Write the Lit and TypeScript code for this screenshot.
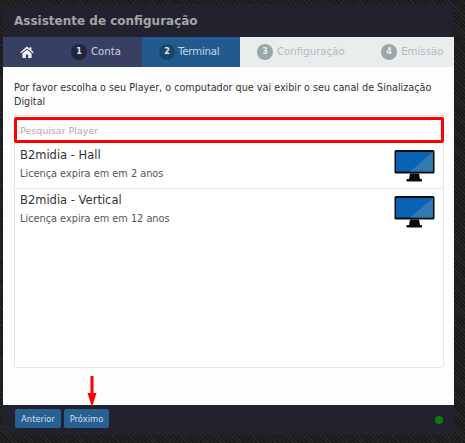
import { LitElement, html, css } from "lit";
import { customElement } from "lit/decorators.js";

const monitor = html`<svg class="mon" width="41" height="32" viewBox="0 0 41 32">
  <rect x="0.5" y="0" width="40" height="23.5" rx="1.5" fill="#0a0a0a"/>
  <rect x="2" y="2" width="37" height="19.5" fill="#0a62b4"/>
  <polygon points="39,2 39,21.5 16,21.5" fill="#3179ae"/>
  <polygon points="16,23.5 25,23.5 26,29 15,29" fill="#0a0a0a"/>
  <rect x="12.5" y="29" width="15.5" height="2.5" rx="0.8" fill="#0a0a0a"/>
</svg>`;

@customElement("app-root")
export class AppRoot extends LitElement {
  static styles = css`
    :host {
      display: block;
      width: 465px;
      height: 443px;
      overflow: hidden;
      position: relative;
      box-sizing: border-box;
      padding: 4px 11px 8px 3px;
      background-color: #1c1c1c;
      background-image: repeating-linear-gradient(45deg, #2a2a2a 0 1px, #1a1a1a 1px 3px);
      font-family: "DejaVu Sans", sans-serif;
      color: #333;
    }
    .modal { height: 431px; display: flex; flex-direction: column; background: #fff; }
    .head {
      height: 33px; flex: none; background: #22222f; color: #a5a5a5;
      font-size: 12px; font-weight: 700; display: flex; align-items: center;
      padding-left: 11px;
    }
    .tabs { height: 30px; flex: none; display: flex; font-size: 10.2px; }
    .tab { display: flex; align-items: center; color: #cdd1de; padding-bottom: 1px; box-sizing: border-box; }
    .home { width: 48px; background: #373f63; justify-content: center; }
    .t1 { width: 91px; background: #373f63; padding-left: 20px; }
    .t2 { width: 98px; background: #215a8e; padding-left: 17px; color: #c6d6e4; letter-spacing: -0.2px; }
    .t3 { flex: 1; background: #e9edee; padding-left: 17px; color: #b0bcbc; }
    .num {
      width: 16px; height: 16px; border-radius: 50%; display: flex; align-items: center;
      justify-content: center; font-size: 8px; font-weight: 700; margin-right: 4px;
      background: #22253f; color: #e8e8e8; flex: none;
    }
    .t2 .num { background: #1a4669; margin-right: 3px; }
    .t3 .num { background: #9aa7a7; color: #e9edee; }
    .gap { width: 36.5px; }
    .body {
      flex: 1; background: #fdfdfd; padding: 14px 10px 37px 11px; display: flex;
      flex-direction: column; min-height: 0;
    }
    .intro { font-size: 9.63px; line-height: 14px; margin: 0 0 6px; color: #333; }
    .list {
      flex: 1; border: 1px solid #e6e6e6; border-radius: 3px; display: flex; flex-direction: column;
      background: #fff;
    }
    .search {
      height: 26px; flex: none; box-sizing: border-box; border: 3px solid #f00; border-radius: 2px;
      margin: 1px -1px 0; display: flex; align-items: center;
      padding-left: 3px; font-size: 9.5px; color: #a8a8a8; background: #fff;
    }
    .item {
      height: 46px; box-sizing: border-box; padding: 5px 8px 0 5px;
      display: flex; justify-content: space-between; align-items: flex-start;
      border-bottom: 1px solid #e6e6e6;
    }
    .item + .item { padding-top: 4px; border-bottom: none; }
    .name { font-size: 11.5px; color: #333; font-weight: 500; line-height: 14px; }
    .lic { font-size: 9.75px; color: #555; line-height: 14px; margin-top: 5px; }
    .mon { margin-top: 2px; display: block; }
    .item + .item .mon { margin-top: 3px; }
    .foot {
      height: 30px; flex: none; box-sizing: border-box; background: #22222f; display: flex; align-items: center;
      padding: 0 11px 3px 12px; gap: 3px;
    }
    .btn {
      height: 19px; border-radius: 2px; background: #276192; color: #d5dfe8; font-size: 8.4px;
      display: flex; align-items: center; justify-content: center;
    }
    .b1 { width: 46px; }
    .b2 { width: 45px; }
    .dot { width: 8px; height: 8px; border-radius: 50%; background: #0b7a0b; margin: 3px 0 0 auto; }
    .arrow { position: absolute; left: 87px; top: 376px; display: block; }
  `;

  render() {
    return html`
      <div class="modal">
        <div class="head">Assistente de configuração</div>
        <div class="tabs">
          <div class="tab home">
            <svg width="14" height="12" viewBox="0 0 14 12">
              <path fill="#f2f2f2" d="M7 .6 .2 6.3l.8 1L7 2.4l6 4.9.8-1L11.4 4.3V1.2H9.6v1.6zM2.4 7.4V12h3.4V8.6h2.4V12h3.4V7.4L7 3.6z"/>
            </svg>
          </div>
          <div class="tab t1"><span class="num">1</span>Conta</div>
          <div class="tab t2"><span class="num">2</span>Terminal</div>
          <div class="tab t3">
            <span class="num">3</span>Configuração<span class="gap"></span><span class="num">4</span>Emissão
          </div>
        </div>
        <div class="body">
          <p class="intro">Por favor escolha o seu Player, o computador que vai exibir o seu canal de Sinalização Digital</p>
          <div class="list">
            <div class="search">Pesquisar Player</div>
            <div class="item">
              <div><div class="name">B2midia - Hall</div><div class="lic">Licença expira em em 2 anos</div></div>
              ${monitor}
            </div>
            <div class="item">
              <div><div class="name">B2midia - Vertical</div><div class="lic">Licença expira em em 12 anos</div></div>
              ${monitor}
            </div>
          </div>
        </div>
        <div class="foot">
          <div class="btn b1">Anterior</div>
          <div class="btn b2">Próximo</div>
          <div class="dot"></div>
        </div>
      </div>
      <svg class="arrow" width="10" height="32" viewBox="0 0 10 32">
        <rect x="3.5" y="0" width="3" height="19" fill="#f00"/>
        <polygon points="0.5,17 9.5,17 5,31" fill="#f00"/>
      </svg>
    `;
  }
}
